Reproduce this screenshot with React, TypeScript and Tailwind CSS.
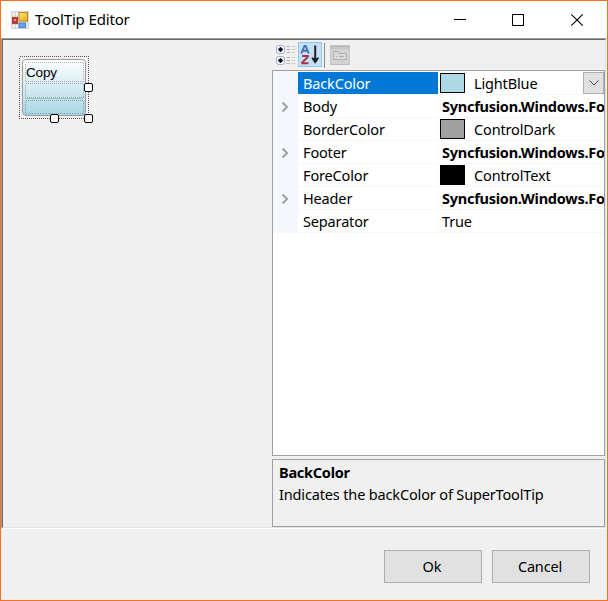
import React from "react";

type RowData = {
  name: string;
  value: string;
  expandable?: boolean;
  swatch?: string;
  selected?: boolean;
};

const rows: RowData[] = [
  { name: "BackColor", value: "LightBlue", swatch: "bg-[#add8e6]", selected: true },
  { name: "Body", value: "Syncfusion.Windows.Fo", expandable: true },
  { name: "BorderColor", value: "ControlDark", swatch: "bg-[#a0a0a0]" },
  { name: "Footer", value: "Syncfusion.Windows.Fo", expandable: true },
  { name: "ForeColor", value: "ControlText", swatch: "bg-black" },
  { name: "Header", value: "Syncfusion.Windows.Fo", expandable: true },
  { name: "Separator", value: "True" },
];

function AppIcon() {
  return (
    <svg width="18" height="18" viewBox="0 0 18 18">
      <defs>
        <linearGradient id="gold" x1="0" y1="0" x2="1" y2="1">
          <stop offset="0" stopColor="#ffe680" />
          <stop offset="1" stopColor="#e8a90c" />
        </linearGradient>
      </defs>
      <rect width="18" height="18" fill="#d6d6d6" />
      <path d="M1.500 1.500h2v3h-2zM5 1.500h2v3H5zM1.500 14h2v2.500h-2zM5 14h2v2.500H5zM15.500 12.500H17v1.500h-1.500zM15.500 15H17v1.500h-1.500z" fill="#fafafa" />
      <rect x="8" y="1.500" width="8.500" height="8.500" fill="url(#gold)" stroke="#bd8e1c" />
      <rect x="1.500" y="6.500" width="5" height="6" fill="#c8322c" stroke="#a84540" />
      <rect x="3" y="8" width="2" height="2" fill="#ee9a92" />
      <rect x="8" y="12" width="6.500" height="4.500" fill="#6aa0f4" stroke="#5584cc" />
    </svg>
  );
}

function TitleBar() {
  return (
    <header className="flex h-[37px] shrink-0 items-center bg-white pl-[10px]">
      <AppIcon />
      <h1 className="ml-[6px] flex-1 text-[15px] tracking-[-0.15px]">ToolTip Editor</h1>
      <svg className="mr-[23px]" width="132" height="14" viewBox="0 0 132 14" fill="none" stroke="#000">
        <path d="M2 6.500h12M60.500 1.500h11v11h-11z" shapeRendering="crispEdges" />
        <path d="M119.300 1.300l11.400 11.400M130.700 1.300l-11.400 11.400" strokeWidth="1.100" />
      </svg>
    </header>
  );
}

function Handle({ className }: { className: string }) {
  return <span className={`absolute size-[9px] rounded-[2px] border border-black bg-white ${className}`} />;
}

function DottedFrame({ width, height, color }: { width: number; height: number; color: string }) {
  return (
    <svg className="absolute inset-0" width={width} height={height} fill="none" shapeRendering="crispEdges">
      <rect x="0.500" y="0.500" width={width - 1} height={height - 1} stroke={color} strokeDasharray="1 1" />
    </svg>
  );
}

function TipPreview() {
  return (
    <div className="relative ml-[16px] mt-[16px] h-[63px] w-[70px] p-[3px]">
      <DottedFrame width={70} height={63} color="#555" />
      <div className="flex h-[57px] w-[64px] flex-col rounded-[4px] border border-[#9c9c9c] bg-gradient-to-b from-white to-[#a9d6e4] px-[2px] pt-[2px]">
        <div className="relative h-[20px] w-[59px]">
          <DottedFrame width={59} height={20} color="#a9b5b9" />
          <span className="block whitespace-nowrap pl-px font-['Liberation_Sans',sans-serif] text-[13.5px] leading-[21px]">
            Copy
          </span>
        </div>
        <div className="relative mt-px h-[15px] w-[59px]">
          <DottedFrame width={59} height={15} color="#9aabb0" />
        </div>
        <div className="h-px w-full bg-[#a3bfc8]" />
        <div className="relative mt-px h-[14px] w-[59px]">
          <DottedFrame width={59} height={14} color="#83a0aa" />
        </div>
      </div>
      <Handle className="left-[65px] top-[27px]" />
      <Handle className="left-[31px] top-[58px]" />
      <Handle className="left-[65px] top-[58px]" />
    </div>
  );
}

function Toolbar() {
  return (
    <div className="flex h-[30px] items-start pl-[4px] pt-[2px]">
      <svg className="mt-[3px]" width="20" height="20" viewBox="0 0 20 20">
        {[0, 11].map((y) => (
          <g key={y} transform={`translate(0 ${y})`}>
            <rect x="0.500" y="0.500" width="8" height="8" rx="2" fill="#f4f6fb" stroke="#a4aec4" />
            <path d="M2 4.500h5M4.500 2v5" stroke="#3c4254" strokeWidth="1.300" />
            <circle cx="4.500" cy="4.500" r="1.900" fill="#080c16" />
            <path d="M10.500 1.500h3.500M10.500 4.500h3.500M10.500 7.500h3.500" stroke="#b0b0b0" />
            <path d="M15.500 1.500h4M15.500 4.500h4M15.500 7.500h4" stroke="#cccccc" />
          </g>
        ))}
      </svg>
      <div className="ml-[2px] flex h-[25px] w-[24px] items-center justify-center border border-[#92c7f0] bg-[#c3e0f7]">
        <svg width="20" height="21" viewBox="0 0 20 21" fill="none">
          <path d="M1.300 9.500L4.500 2h1.200l3.100 7.500M2.900 6.800h4.400" stroke="#496eae" strokeWidth="1.900" />
          <path d="M2 12h5.800v.8L2.200 18.500v.7H8.500" stroke="#a73543" strokeWidth="1.900" />
          <path d="M15.200 1.500v14" stroke="#222" strokeWidth="2" />
          <path d="M11.800 13l2.400 1.300h2L18.600 13v2l-3.400 4.800L11.800 15z" fill="#222" />
        </svg>
      </div>
      <div className="ml-[2px] mt-px h-[25px] w-px bg-[#8a8a8a]" />
      <svg className="ml-[5px] mt-[3px]" width="20" height="20" viewBox="0 0 20 20" fill="none">
        <rect width="20" height="20" fill="#c6c6c6" />
        <path d="M1 1.500h18" stroke="#b6b6b6" />
        <rect x="1" y="4" width="18" height="15" fill="#d2d2d2" />
        <path d="M3.500 14.500v-8h4.500l1 2h7.500v6z" fill="#dadada" stroke="#b0b0b0" />
        <path d="M6 11.500h1.500M9 11.500h5" stroke="#adadad" />
        <path d="M0 19.500h20" stroke="#bababa" />
      </svg>
    </div>
  );
}

function PropertyRow({ row }: { row: RowData }) {
  return (
    <div className="flex h-[23px] shrink-0">
      <div className="flex w-[25px] shrink-0 items-center justify-center bg-[#f4f7fc] pr-px">
        {row.expandable && (
          <svg width="8" height="12" viewBox="0 0 8 12" fill="none">
            <path d="M1.500 1.500L6 6l-4.500 4.500" stroke="#a0a0a0" strokeWidth="2" />
          </svg>
        )}
      </div>
      <div
        className={`w-[140px] shrink-0 border-b border-[#f4f7fc] pl-[5px] leading-[23px] ${
          row.selected ? "bg-[#0078d7] text-white" : ""
        }`}
      >
        {row.name}
      </div>
      <div className="flex min-w-0 flex-1 overflow-hidden border-b border-l border-[#f4f7fc] leading-[23px]">
        {row.swatch && <div className={`ml-px mt-px h-[20px] w-[25px] shrink-0 border border-black ${row.swatch}`} />}
        <div
          className={`min-w-0 flex-1 overflow-hidden whitespace-nowrap ${
            row.swatch ? "pl-[9px]" : "pl-[3px]"
          } ${row.expandable ? "font-bold tracking-[-0.25px]" : ""}`}
        >
          {row.value}
        </div>
        {row.selected && (
          <button className="flex h-[22px] w-[21px] shrink-0 items-center justify-center border border-[#adadad] bg-[#e1e1e1]">
            <svg width="10" height="6" viewBox="0 0 10 6" fill="none">
              <path d="M0.500 0.500L5 5l4.500-4.500" stroke="#444" />
            </svg>
          </button>
        )}
      </div>
    </div>
  );
}

export default function App() {
  return (
    <main className="flex h-[601px] w-[608px] flex-col overflow-hidden border border-[#f57020] bg-[#f0f0f0] font-['Noto_Sans','Open_Sans',sans-serif] text-[14.5px] tracking-[-0.15px] text-black">
      <TitleBar />
      <div className="h-[491px] w-[606px] shrink-0 border border-b-white border-l-[#a0a0a0] border-r-white border-t-[#a0a0a0]">
        <div className="flex h-full border border-b-[#e3e3e3] border-l-[#696969] border-r-[#e3e3e3] border-t-[#696969]">
          <section className="w-[269px] shrink-0">
            <TipPreview />
          </section>
          <section className="flex w-[333px] flex-col">
            <Toolbar />
            <div className="flex h-[386px] flex-col border border-[#a0a0a0] bg-white">
              <div className="h-px w-[25px] shrink-0 bg-[#f4f7fc]" />
              {rows.map((row) => (
                <PropertyRow key={row.name} row={row} />
              ))}
            </div>
            <div className="mt-[3px] h-[68px] border border-[#a0a0a0] pl-[6px] pt-px leading-[22px]">
              <h2 className="font-bold tracking-[-0.25px]">BackColor</h2>
              <p>Indicates the backColor of SuperToolTip</p>
            </div>
          </section>
        </div>
      </div>
      <footer className="flex justify-end gap-[10px] pr-[17px] pt-[21px]">
        <button className="h-[33px] w-[98px] border border-[#adadad] bg-[#e1e1e1] pr-[2px]">Ok</button>
        <button className="h-[33px] w-[98px] border border-[#adadad] bg-[#e1e1e1] pr-[2px]">Cancel</button>
      </footer>
    </main>
  );
}
